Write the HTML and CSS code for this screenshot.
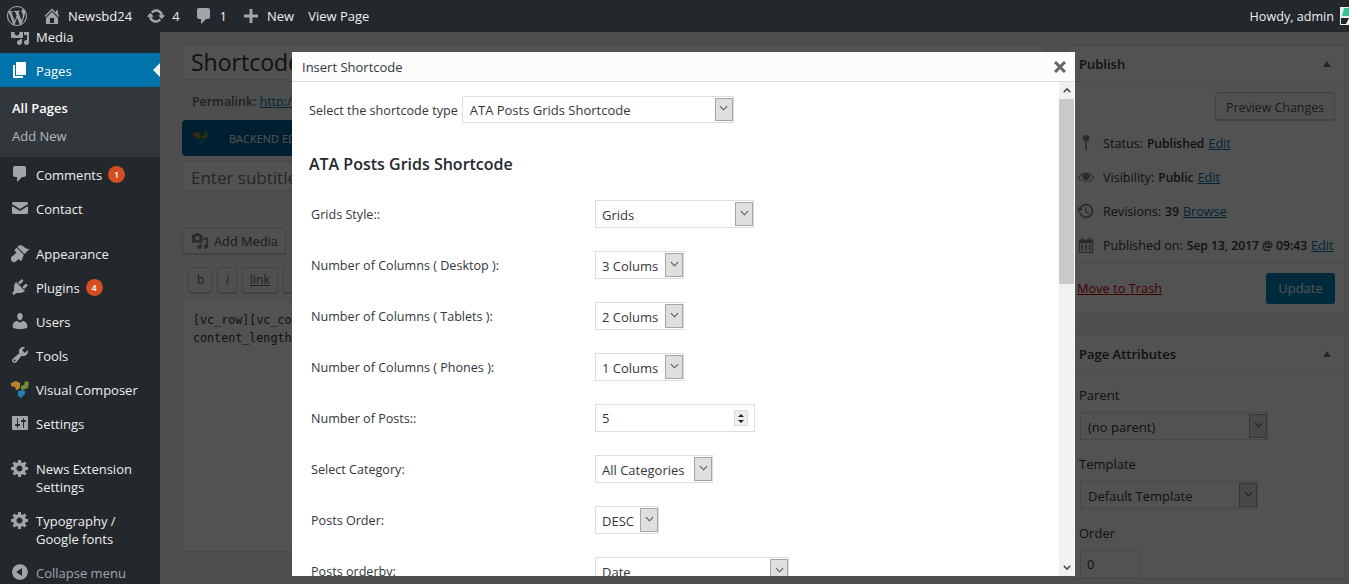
FILE: index.html
```html
<!DOCTYPE html>
<html lang="en">
  <head>
    <meta charset="UTF-8" />
    <title>Edit Page</title>
    <link rel="stylesheet" href="styles.css">
  </head>
  <body>
    <svg class="defs" width="0" height="0">
      <symbol id="i-wp" viewBox="0 0 20 20"><path d="M20 10c0-5.51-4.49-10-10-10C4.48 0 0 4.49 0 10c0 5.52 4.48 10 10 10 5.51 0 10-4.48 10-10zM7.78 15.37L4.37 6.22c.55-.02 1.17-.08 1.17-.08.5-.06.44-1.13-.06-1.11 0 0-1.45.11-2.37.11-.18 0-.37 0-.58-.01C4.12 2.69 6.87 1.11 10 1.11c2.33 0 4.45.87 6.05 2.34-.68-.11-1.65.39-1.65 1.58 0 .74.45 1.36.9 2.1.35.61.55 1.36.55 2.46 0 1.49-1.4 5-1.4 5l-3.03-8.37c.54-.02.82-.17.82-.17.5-.05.44-1.25-.06-1.22 0 0-1.44.12-2.38.12-.87 0-2.33-.12-2.33-.12-.5-.03-.56 1.2-.06 1.22l.92.08 1.26 3.41zM17.41 10c.24-.64.74-1.87.43-4.25.7 1.29 1.05 2.71 1.05 4.25 0 3.29-1.73 6.24-4.4 7.78.97-2.59 1.94-5.2 2.92-7.78zM6.1 18.09C3.12 16.65 1.11 13.53 1.11 10c0-1.3.23-2.48.72-3.59C3.25 10.3 4.67 14.2 6.1 18.09zm4.03-6.63l2.58 6.98c-.86.29-1.76.45-2.71.45-.79 0-1.57-.11-2.29-.33.81-2.38 1.62-4.74 2.42-7.1z"/></symbol>
      <symbol id="i-home" viewBox="0 0 20 20"><path d="M16 8.5l1.53 1.53-1.06 1.06L10 4.62l-6.47 6.47-1.06-1.06L10 2.5l4 4v-2h2v4zm-6-2.46l6 5.99V18H4v-5.97zM12 17v-5H8v5h4z"/></symbol>
      <symbol id="i-update" viewBox="0 0 20 20"><path d="M10.2 3.28c3.53 0 6.43 2.61 6.92 6h2.08l-3.5 4-3.5-4h2.32c-.45-1.97-2.21-3.45-4.32-3.45-1.45 0-2.73.71-3.54 1.78L4.95 5.66C6.23 4.2 8.11 3.28 10.2 3.28zm-.4 13.44c-3.52 0-6.43-2.61-6.92-6H.8l3.5-4c1.17 1.33 2.33 2.67 3.5 4H5.48c.45 1.97 2.21 3.45 4.32 3.45 1.45 0 2.73-.71 3.54-1.78l1.71 1.95c-1.28 1.46-3.15 2.38-5.25 2.38z"/></symbol>
      <symbol id="i-comment" viewBox="0 0 20 20"><path d="M5 2h9c1.1 0 2 .9 2 2v7c0 1.1-.9 2-2 2h-2l-5 5v-5H5c-1.1 0-2-.9-2-2V4c0-1.1.9-2 2-2z"/></symbol>
      <symbol id="i-plus" viewBox="0 0 20 20"><path d="M8.5 3h3v5.5H17v3h-5.5V17h-3v-5.5H3v-3h5.5z"/></symbol>
      <symbol id="i-pages" viewBox="0 0 20 20"><path d="M6 15V2h10v13H6zm-1 1h8v2H3V5h2v11z"/></symbol>
      <symbol id="i-media" viewBox="0 0 20 20"><path d="M13 11V4c0-.55-.45-1-1-1h-1.67L9 1H5L3.67 3H2c-.55 0-1 .45-1 1v7c0 .55.45 1 1 1h10c.55 0 1-.45 1-1zM7 4.5c1.38 0 2.5 1.12 2.5 2.5S8.38 9.5 7 9.5 4.5 8.38 4.5 7 5.62 4.5 7 4.5zM14 6h5v10.5c0 1.38-1.12 2.5-2.5 2.5S14 17.88 14 16.5s1.12-2.5 2.5-2.5c.17 0 .34.02.5.05V9h-3V6zm-4 8.05V13h2v3.5c0 1.38-1.12 2.5-2.5 2.5S7 17.88 7 16.5 8.12 14 9.5 14c.17 0 .34.02.5.05z"/></symbol>
      <symbol id="i-mail" viewBox="0 0 20 20"><path d="M2 5.5C2 4.7 2.7 4 3.500 4h13c.8 0 1.500.7 1.500 1.500V6l-8 5-8-5zM2 8l8 5 8-5v6.500c0 .8-.7 1.500-1.500 1.500h-13C2.700 16 2 15.300 2 14.500z"/></symbol>
      <symbol id="i-brush" viewBox="0 0 20 20"><path d="M14.48 11.06L7.41 3.99l1.5-1.5c.5-.56 2.3-.47 3.51.32 1.21.8 1.43 1.28 2.91 2.1 1.18.64 2.45 1.26 4.45.85zm-.71.71L6.7 4.7 4.93 6.47c-.39.39-.39 1.02 0 1.41l1.06 1.06c.39.39.39 1.03 0 1.42-.6.6-1.43 1.11-2.21 1.69-.35.26-.7.53-1.01.84C1.43 13.23.91 14.38 1 16.05c.06 1.04.45 2.37 2 2.95.44.16 1.42.24 2.08-.08 1.24-.59 2.1-1.57 2.92-2.39.39-.39 1.02-.39 1.41 0l.91.91c.39.39 1.02.39 1.42 0z"/></symbol>
      <symbol id="i-plug" viewBox="0 0 20 20"><path d="M13.11 4.36L9.87 7.6 8 5.73l3.24-3.24c.35-.34 1.05-.2 1.56.32.52.51.66 1.21.31 1.55zm-8 1.77l.91-1.12 9.01 9.01-1.19.84c-.71.71-2.63 1.16-3.82 1.16H6.14L4.9 17.26c-.59.59-1.54.59-2.12 0-.59-.58-.59-1.53 0-2.12l1.24-1.24v-3.88c0-1.13.4-3.19 1.09-3.89zm7.26 3.97l3.24-3.24c.34-.35 1.04-.21 1.55.31.52.51.66 1.21.31 1.55l-3.24 3.25z"/></symbol>
      <symbol id="i-user" viewBox="0 0 20 20"><path d="M10 9.25c-2.27 0-2.73-3.44-2.73-3.44C7 4.02 7.82 2 9.97 2c2.16 0 2.98 2.02 2.71 3.81 0 0-.41 3.44-2.68 3.44zm0 2.57L12.72 10c2.39 0 4.52 2.33 4.52 4.53v2.49s-3.65 1.13-7.24 1.13c-3.65 0-7.24-1.13-7.24-1.13v-2.49c0-2.25 1.94-4.48 4.47-4.48z"/></symbol>
      <symbol id="i-tools" viewBox="0 0 20 20"><path d="M16.68 9.770c-1.34 1.34-3.3 1.67-4.95.99l-5.41 6.52c-.99.99-2.59.99-3.58 0s-.99-2.59 0-3.57l6.52-5.42c-.68-1.65-.35-3.61.99-4.95 1.28-1.28 3.12-1.62 4.72-1.06l-2.89 2.89 2.82 2.82 2.86-2.87c.53 1.58.18 3.39-1.08 4.65zM3.81 16.21c.4.39 1.04.39 1.43 0 .4-.4.4-1.04 0-1.43-.39-.4-1.03-.4-1.43 0-.39.39-.39 1.03 0 1.43z"/></symbol>
      <symbol id="i-sliders" viewBox="0 0 20 20"><path d="M18 16V4c0-.55-.45-1-1-1H3c-.55 0-1 .45-1 1v12c0 .55.45 1 1 1h14c.55 0 1-.45 1-1zM8 11h1c.55 0 1 .45 1 1s-.45 1-1 1H8v1.500c0 .28-.22.5-.5.5s-.5-.22-.5-.5V13H6c-.55 0-1-.45-1-1s.45-1 1-1h1V5.500c0-.28.22-.5.5-.5s.5.22.5.5V11zm5-2h-1c-.55 0-1-.45-1-1s.45-1 1-1h1V5.500c0-.28.22-.5.5-.5s.5.22.5.5V7h1c.55 0 1 .45 1 1s-.45 1-1 1h-1v5.500c0 .28-.22.5-.5.5s-.5-.22-.5-.5V9z"/></symbol>
      <symbol id="i-gear" viewBox="0 0 20 20"><path d="M18 12h-2.180c-.17.7-.44 1.350-.81 1.930l1.540 1.540-2.100 2.100-1.540-1.540c-.58.36-1.230.63-1.910.79V19H8v-2.180c-.68-.16-1.330-.43-1.910-.79l-1.540 1.540-2.120-2.120 1.540-1.540c-.36-.58-.63-1.230-.79-1.910H1V9.030h2.170c.16-.7.44-1.350.8-1.940L2.430 5.550l2.100-2.100 1.540 1.540c.58-.37 1.240-.64 1.930-.81V2h3v2.180c.68.16 1.330.43 1.910.79l1.540-1.540 2.120 2.120-1.540 1.540c.36.59.64 1.240.8 1.940H18V12zm-8.500 1.500c1.660 0 3-1.340 3-3s-1.340-3-3-3-3 1.340-3 3 1.340 3 3 3z"/></symbol>
      <symbol id="i-collapse" viewBox="0 0 20 20"><path d="M10 2.160c4.330 0 7.840 3.510 7.840 7.840s-3.510 7.840-7.840 7.840S2.160 14.330 2.160 10 5.710 2.160 10 2.160zm2 11.720V6.120L6.180 9.970z"/></symbol>
      <symbol id="i-vc" viewBox="0 0 20 20"><path fill="#b5842a" d="M1 4l5-2 4 2v5l-3 2-1 0-1-3-4-1z"/><path fill="#6e8f3a" d="M11 7l3-1 1-4 4 1-1 6-5 2-2-1z"/><path fill="#1f7fae" d="M8 12l4-1 3 1v3l-4 4-3-2z"/></symbol>
      <symbol id="i-pin" viewBox="0 0 20 20"><path d="M10 1a3.800 3.800 0 0 0-1 7.470V17l1 2 1-2V8.470A3.800 3.800 0 0 0 10 1z"/></symbol>
      <symbol id="i-eye" viewBox="0 0 20 20"><path d="M18.300 9.500C15 4.900 8.500 3.800 3.900 7.200c-1.200.9-2.200 2.100-3 3.400.2.4.5.8.8 1.200 3.300 4.600 9.600 5.600 14.200 2.400.9-.7 1.700-1.400 2.400-2.400.3-.4.5-.8.8-1.200-.2-.3-.5-.7-.8-1.100zM10 15.200c-3.100 0-6-1.600-7.700-4.200C3.500 9 5.100 7.800 7 7c-.7.8-1 1.700-1 2.700 0 2.200 1.700 4.100 4 4.100 2.200 0 4.100-1.700 4.100-4v-.1c0-1-.4-2-1.100-2.700 1.900.8 3.500 2 4.700 3.900-1.700 2.700-4.600 4.300-7.700 4.300z"/></symbol>
      <symbol id="i-history" viewBox="0 0 20 20"><path d="M13.650 2.880c3.930 2.010 5.480 6.840 3.470 10.770s-6.830 5.480-10.770 3.470c-1.870-.96-3.200-2.560-3.860-4.400l1.640-1.030c.45 1.570 1.520 2.950 3.080 3.760 3.010 1.540 6.690.35 8.230-2.660 1.550-3.010.36-6.690-2.650-8.240C9.780 3.010 6.100 4.200 4.560 7.210l1.880.97-4.950 3.080-.39-5.820 1.780.91C4.900 2.400 9.750.89 13.650 2.880zM9 6h1.500v4.500l3 1.800-.8 1.200L9 11.300z"/></symbol>
      <symbol id="i-calendar" viewBox="0 0 20 20"><path d="M15 4h3v15H2V4h3V2h2v2h6V2h2zM3.500 8v9.500h13V8zM5 9.500h2v6.500H5zm4 0h2v6.500H9zm4 0h2v6.500h-2z"/></symbol>
      <symbol id="i-chev" viewBox="0 0 10 6"><path d="M1 1l4 4 4-4" fill="none" stroke="currentColor" stroke-width="1.200"/></symbol>
      <symbol id="i-chev-bold" viewBox="0 0 10 6"><path d="M1 1l4 4 4-4" fill="none" stroke="currentColor" stroke-width="2"/></symbol>
    </svg>

    <div class="adminbar">
      <a class="ab-item ab-logo"><svg class="ab-icon"><use href="#i-wp"/></svg></a>
      <a class="ab-item"><svg class="ab-icon"><use href="#i-home"/></svg>Newsbd24</a>
      <a class="ab-item"><svg class="ab-icon"><use href="#i-update"/></svg>4</a>
      <a class="ab-item"><svg class="ab-icon"><use href="#i-comment"/></svg>1</a>
      <a class="ab-item"><svg class="ab-icon"><use href="#i-plus"/></svg>New</a>
      <a class="ab-item">View Page</a>
      <div class="ab-right">
        <span>Howdy, admin</span>
        <svg class="avatar" viewBox="0 0 9 18"><rect width="9" height="18" fill="#e8eeee"/><path fill="#36c39a" d="M4 1h5v8H2z"/><path fill="#1d2327" d="M1 11h8l-3 6H1z"/></svg>
      </div>
    </div>

    <div class="wrap">
      <nav class="sidebar">
        <a class="menu-item menu-clipped"><svg class="menu-icon"><use href="#i-media"/></svg>Media</a>
        <a class="menu-item menu-current"><svg class="menu-icon"><use href="#i-pages"/></svg>Pages<i class="menu-arrow"></i></a>
        <div class="submenu">
          <a class="sub-current">All Pages</a>
          <a>Add New</a>
        </div>
        <a class="menu-item"><svg class="menu-icon"><use href="#i-comment"/></svg>Comments<span class="count">1</span></a>
        <a class="menu-item menu-sep"><svg class="menu-icon"><use href="#i-mail"/></svg>Contact</a>
        <a class="menu-item"><svg class="menu-icon"><use href="#i-brush"/></svg>Appearance</a>
        <a class="menu-item"><svg class="menu-icon"><use href="#i-plug"/></svg>Plugins<span class="count">4</span></a>
        <a class="menu-item"><svg class="menu-icon"><use href="#i-user"/></svg>Users</a>
        <a class="menu-item"><svg class="menu-icon"><use href="#i-tools"/></svg>Tools</a>
        <a class="menu-item"><svg class="menu-icon"><use href="#i-vc"/></svg>Visual Composer</a>
        <a class="menu-item menu-sep"><svg class="menu-icon"><use href="#i-sliders"/></svg>Settings</a>
        <a class="menu-item menu-tall"><svg class="menu-icon"><use href="#i-gear"/></svg><span>News Extension<br />Settings</span></a>
        <a class="menu-item menu-tall"><svg class="menu-icon"><use href="#i-gear"/></svg><span>Typography /<br />Google fonts</span></a>
        <a class="menu-item menu-collapse"><svg class="menu-icon"><use href="#i-collapse"/></svg>Collapse menu</a>
      </nav>

      <main class="content">
        <div class="editor-col">
          <div class="title-input">Shortcode</div>
          <div class="permalink"><b>Permalink:</b> <a href="#">http://newsbd24.local/shortcode/</a></div>
          <div class="vc-bar">
            <span class="vc-logo"><svg class="vc-icon"><use href="#i-vc"/></svg></span>
            <span>BACKEND EDITOR</span>
          </div>
          <div class="subtitle-input">Enter subtitle here</div>
          <div class="btn add-media"><svg class="btn-icon"><use href="#i-media"/></svg>Add Media</div>
          <div class="editor">
            <div class="toolbar">
              <span class="tb-btn tb-b">b</span>
              <span class="tb-btn tb-i">i</span>
              <span class="tb-btn tb-link">link</span>
              <span class="tb-btn">b-quote</span>
            </div>
            <div class="code">[vc_row][vc_column][ata_posts_grids columns="3"<br />content_length="20"]</div>
          </div>
        </div>

        <aside class="side-col">
          <section class="postbox">
            <h2 class="postbox-head">Publish<i class="caret-up"></i></h2>
            <div class="publish-top"><span class="btn btn-preview">Preview Changes</span></div>
            <p class="pub-row"><svg class="pub-icon"><use href="#i-pin"/></svg>Status: <b>Published</b> <a href="#">Edit</a></p>
            <p class="pub-row"><svg class="pub-icon"><use href="#i-eye"/></svg>Visibility: <b>Public</b> <a href="#">Edit</a></p>
            <p class="pub-row"><svg class="pub-icon"><use href="#i-history"/></svg>Revisions: <b>39</b> <a href="#">Browse</a></p>
            <p class="pub-row"><svg class="pub-icon"><use href="#i-calendar"/></svg>Published on: <b>Sep 13, 2017 @ 09:43</b> <a href="#">Edit</a></p>
            <div class="publish-actions">
              <a class="trash" href="#">Move to Trash</a>
              <span class="btn-primary">Update</span>
            </div>
          </section>

          <section class="postbox">
            <h2 class="postbox-head">Page Attributes<i class="caret-up"></i></h2>
            <div class="attr-body">
              <p class="attr-label">Parent</p>
              <div class="sel sel-parent"><span class="sel-value">(no parent)</span><span class="sel-arrow"><svg><use href="#i-chev"/></svg></span></div>
              <p class="attr-label">Template</p>
              <div class="sel sel-template"><span class="sel-value">Default Template</span><span class="sel-arrow"><svg><use href="#i-chev"/></svg></span></div>
              <p class="attr-label">Order</p>
              <div class="order-input">0</div>
            </div>
          </section>
        </aside>
      </main>
      <div class="overlay"></div>
    </div>

    <div class="modal">
      <div class="modal-head">
        <span>Insert Shortcode</span>
        <svg class="modal-close" viewBox="0 0 12 12"><path d="M1 1l10 10M11 1L1 11" stroke="#666" stroke-width="3" fill="none"/></svg>
      </div>
      <div class="modal-main">
        <div class="modal-body">
          <div class="type-row">
            <label>Select the shortcode type</label>
            <div class="sel sel-type"><span class="sel-value">ATA Posts Grids Shortcode</span><span class="sel-arrow"><svg><use href="#i-chev"/></svg></span></div>
          </div>
          <h3 class="sc-title">ATA Posts Grids Shortcode</h3>
          <div class="field">
            <label>Grids Style::</label>
            <div class="sel w-159"><span class="sel-value">Grids</span><span class="sel-arrow"><svg><use href="#i-chev"/></svg></span></div>
          </div>
          <div class="field">
            <label>Number of Columns ( Desktop ):</label>
            <div class="sel w-89"><span class="sel-value">3 Colums</span><span class="sel-arrow"><svg><use href="#i-chev"/></svg></span></div>
          </div>
          <div class="field">
            <label>Number of Columns ( Tablets ):</label>
            <div class="sel w-89"><span class="sel-value">2 Colums</span><span class="sel-arrow"><svg><use href="#i-chev"/></svg></span></div>
          </div>
          <div class="field">
            <label>Number of Columns ( Phones ):</label>
            <div class="sel w-89"><span class="sel-value">1 Colums</span><span class="sel-arrow"><svg><use href="#i-chev"/></svg></span></div>
          </div>
          <div class="field">
            <label>Number of Posts::</label>
            <div class="num-input"><span>5</span><span class="spin"><i class="spin-up"></i><i class="spin-down"></i></span></div>
          </div>
          <div class="field">
            <label>Select Category:</label>
            <div class="sel w-118"><span class="sel-value">All Categories</span><span class="sel-arrow"><svg><use href="#i-chev"/></svg></span></div>
          </div>
          <div class="field">
            <label>Posts Order:</label>
            <div class="sel w-64"><span class="sel-value">DESC</span><span class="sel-arrow"><svg><use href="#i-chev"/></svg></span></div>
          </div>
          <div class="field">
            <label>Posts orderby:</label>
            <div class="sel w-194"><span class="sel-value">Date</span><span class="sel-arrow"><svg><use href="#i-chev"/></svg></span></div>
          </div>
        </div>
        <div class="scrollbar">
          <span class="sb-btn"><svg class="sb-up"><use href="#i-chev-bold"/></svg></span>
          <span class="sb-thumb"></span>
          <span class="sb-track"></span>
          <span class="sb-btn"><svg><use href="#i-chev-bold"/></svg></span>
        </div>
      </div>
    </div>
  </body>
</html>
```

FILE: styles.css
```css
* {
  box-sizing: border-box;
}

html,
body {
  margin: 0;
  height: 584px;
  overflow: hidden;
}

body {
  position: relative;
  background-color: #f1f1f1;
  font-family: "Open Sans", "Liberation Sans", sans-serif;
  font-size: 13px;
  color: #444;
}

.defs {
  position: absolute;
}

/* top bar */
.adminbar {
  display: flex;
  align-items: center;
  height: 32px;
  background-color: #23282d;
  color: #eee;
  position: relative;
  z-index: 2;
}

.ab-item {
  display: flex;
  align-items: center;
  gap: 6px;
  padding: 0 7px;
  line-height: 32px;
  font-size: 13px;
}

.ab-icon {
  width: 20px;
  height: 20px;
  fill: #a0a5aa;
}

.ab-logo {
  padding-right: 8px;
}

.ab-right {
  display: flex;
  align-items: center;
  gap: 6px;
  margin-left: auto;
  font-size: 12.6px;
}

.avatar {
  flex: none;
  width: 9px;
  height: 18px;
}

.wrap {
  display: flex;
  position: relative;
  height: 552px;
  overflow: hidden;
}

/* left menu */
.sidebar {
  flex: 0 0 160px;
  background-color: #23282d;
  color: #eee;
  font-size: 13px;
  overflow: hidden;
  position: relative;
  z-index: 2;
}

.menu-item {
  display: flex;
  align-items: center;
  height: 34px;
  padding-top: 2px;
  position: relative;
}

.menu-icon {
  width: 20px;
  height: 20px;
  flex: none;
  margin: -2px 6px 0 10px;
  fill: #a0a5aa;
}

.menu-clipped {
  margin-top: -13px;
}

.menu-current {
  background-color: #0073aa;
  color: #fff;
}

.menu-current .menu-icon {
  fill: #fff;
}

.menu-arrow {
  position: absolute;
  right: 0;
  top: 10px;
  border: 7px solid transparent;
  border-right-color: #f1f1f1;
  border-left-width: 0;
}

.submenu {
  display: flex;
  flex-direction: column;
  height: 70px;
  padding: 7px 0 0 12px;
  background-color: #32373c;
  color: #b4b9be;
  font-size: 13px;
}

.submenu a {
  height: 28px;
  line-height: 28px;
}

.sub-current {
  color: #fff;
  font-weight: 600;
}

.count {
  display: inline-block;
  width: 17px;
  height: 17px;
  margin: -2px 0 0 6px;
  border-radius: 50%;
  background-color: #d54e21;
  color: #fff;
  font-size: 9px;
  font-weight: 600;
  line-height: 17px;
  text-align: center;
}

.menu-sep {
  margin-bottom: 11px;
}

.menu-tall {
  height: 52px;
  line-height: 18px;
  align-items: flex-start;
  padding-top: 9px;
}

.menu-collapse {
  color: #a0a5aa;
}

/* page behind the dialog */
.content {
  flex: 1;
  display: grid;
  grid-template-columns: 863px 278px;
  column-gap: 22px;
  padding: 12px 0 0 22px;
  color: #32373c;
  align-items: start;
  overflow: hidden;
}

.title-input {
  height: 36px;
  padding: 0 8px;
  background-color: #fff;
  border: 1px solid #ddd;
  font-size: 23px;
  line-height: 34px;
}

.permalink {
  height: 40px;
  padding: 12px 10px 0;
  color: #666;
  font-size: 12.4px;
  line-height: 20px;
}

.permalink b {
  font-weight: 600;
}

.permalink a,
.pub-row a {
  color: #0073aa;
}

.vc-bar {
  display: flex;
  align-items: center;
  height: 36px;
  background-color: #00629a;
  border-radius: 4px;
  color: #fff;
  font-size: 11px;
}

.vc-logo {
  display: flex;
  align-items: center;
  height: 36px;
  padding: 0 10px;
  margin-right: 9px;
  border-right: 1px solid #005a8a;
}

.vc-icon {
  width: 17px;
  height: 17px;
}

.subtitle-input {
  height: 30px;
  margin: 5px 0 37px;
  padding: 0 8px;
  background-color: #fff;
  border: 1px solid #ddd;
  color: #72777c;
  font-size: 17px;
  line-height: 32px;
}

.btn {
  display: inline-flex;
  align-items: center;
  height: 28px;
  padding: 0 10px;
  background-color: #f7f7f7;
  border: 1px solid #ccc;
  border-radius: 3px;
  box-shadow: 0 1px 0 #ccc;
  color: #555;
  white-space: nowrap;
}

.btn-preview {
  justify-content: center;
  width: 120px;
  padding: 2px 0 0;
  font-size: 12.4px;
}

.add-media {
  height: 26px;
  padding: 0 6px 0 8px;
  width: 104px;
  gap: 5px;
  font-size: 12.8px;
}

.btn-icon {
  width: 18px;
  height: 18px;
  flex: none;
  fill: #82878c;
}

.editor {
  margin-top: 8px;
  height: 290px;
  background-color: #fdfdfd;
  border: 1px solid #e5e5e5;
}

.toolbar {
  display: flex;
  gap: 5px;
  height: 36px;
  padding: 4px 5px;
  background-color: #f5f5f5;
  border-bottom: 1px solid #e5e5e5;
}

.tb-btn {
  height: 26px;
  padding: 0 8px;
  background-color: #f7f7f7;
  border: 1px solid #ccc;
  border-radius: 3px;
  box-shadow: 0 1px 0 #ccc;
  color: #666;
  font-size: 12px;
  line-height: 24px;
}

.tb-b {
  width: 24px;
}

.tb-i {
  width: 20px;
  font-style: italic;
}

.tb-link {
  width: 36px;
  padding: 0 7px;
  text-decoration: underline;
}

.code {
  padding: 12px 10px;
  font-family: "DejaVu Sans Mono", "Liberation Mono", monospace;
  font-size: 11.7px;
  line-height: 18px;
  color: #32373c;
}

.postbox {
  margin: 1px 0 21px;
  background-color: #fff;
  border: 1px solid #e5e5e5;
}

.postbox-head {
  display: flex;
  justify-content: space-between;
  align-items: center;
  height: 36px;
  margin: 0;
  padding: 0 13px 0 11px;
  border-bottom: 1px solid #eee;
  font-size: 13px;
  font-weight: 600;
  color: #32373c;
}

.caret-up {
  border: 4px solid transparent;
  border-bottom: 6px solid #72777c;
  border-top-width: 0;
}

.publish-top {
  display: flex;
  justify-content: flex-end;
  padding: 10px 9px 6px;
}

.pub-row {
  display: flex;
  align-items: center;
  gap: 4px;
  height: 34px;
  margin: 0;
  padding-left: 9px;
  font-size: 12.6px;
  white-space: nowrap;
}

.pub-row b {
  font-size: 12.1px;
  font-weight: 600;
}

.pub-icon {
  flex: none;
  width: 18px;
  height: 18px;
  margin-right: 4px;
  fill: #82878c;
}

.publish-actions {
  display: flex;
  justify-content: space-between;
  align-items: center;
  height: 51px;
  padding: 0 9px;
  border-top: 1px solid #ddd;
}

.trash {
  color: #c00;
  font-size: 12.8px;
}

.btn-primary {
  width: 69px;
  height: 31px;
  background-color: #0085ba;
  border-radius: 3px;
  color: #fff;
  line-height: 31px;
  text-align: center;
}

.attr-body {
  padding: 14px 12px 0;
}

.attr-label {
  margin: 0 0 8px -1px;
  line-height: 18px;
}

.attr-body .sel {
  margin-bottom: 15px;
}

.attr-body .sel-value {
  padding-left: 6px;
}

.order-input {
  width: 60px;
  height: 28px;
  padding: 0 6px;
  background-color: #fff;
  border: 1px solid #ddd;
  line-height: 26px;
}

.overlay {
  position: absolute;
  left: 160px;
  right: 0;
  top: 0;
  bottom: 0;
  background-color: rgba(0, 0, 0, 0.68);
}

/* dialog */
.modal {
  position: absolute;
  left: 292px;
  top: 52px;
  width: 783px;
  height: 524px;
  display: flex;
  flex-direction: column;
  background-color: #fff;
  color: #32373c;
  z-index: 3;
}

.modal-head {
  display: flex;
  justify-content: space-between;
  align-items: center;
  flex: 0 0 30px;
  padding: 0 9px 0 10px;
  background-color: #fcfcfc;
  border-bottom: 1px solid #ddd;
  font-size: 13px;
}

.modal-close {
  width: 12px;
  height: 12px;
}

.modal-main {
  flex: 1;
  display: flex;
  min-height: 0;
}

.modal-body {
  flex: 1;
  overflow: hidden;
  padding: 14px 0 0 17px;
  font-size: 12.6px;
}

.type-row {
  display: flex;
  align-items: center;
  gap: 4px;
  height: 27px;
}

.type-row label {
  padding-top: 2px;
}

.type-row .sel-value {
  padding-left: 6px;
  line-height: 25px;
}

.sc-title {
  margin: 29px 0 0;
  height: 24px;
  line-height: 24px;
  font-size: 16px;
  font-weight: 600;
  color: #23282d;
}

.field {
  display: flex;
  align-items: center;
  height: 28px;
  margin-bottom: 23px;
  padding-left: 2px;
}

.sc-title + .field {
  margin-top: 24px;
}

.field label {
  flex: 0 0 284px;
}

.sel {
  display: flex;
  align-items: stretch;
  height: 28px;
  padding: 1px 0 1px 1px;
  background-color: #fff;
  border: 1px solid #ddd;
  font-size: 13px;
  color: #32373c;
}

.sel-value {
  flex: 1;
  padding-left: 5px;
  line-height: 26px;
  white-space: nowrap;
}

.sel-arrow {
  display: flex;
  align-items: center;
  justify-content: center;
  flex: 0 0 18px;
  background-color: #dfdfdf;
  border: 1px solid #a6a6a6;
  color: #555;
}

.sel-arrow svg {
  width: 9px;
  height: 6px;
  margin-top: -3px;
}

.sel-type {
  width: 272px;
  height: 27px;
}

.sel-parent {
  width: 188px;
}

.sel-template {
  width: 178px;
}

.w-159 {
  width: 159px;
}

.w-89 {
  width: 89px;
}

.w-118 {
  width: 118px;
}

.w-64 {
  width: 64px;
}

.w-194 {
  width: 194px;
}

.num-input {
  display: flex;
  align-items: center;
  justify-content: space-between;
  width: 160px;
  height: 28px;
  padding: 0 6px;
  background-color: #fff;
  border: 1px solid #ddd;
  font-size: 13px;
}

.spin {
  display: flex;
  flex-direction: column;
  align-items: center;
  gap: 3px;
  width: 14px;
  height: 16px;
  padding-top: 3px;
  background-color: #eee;
  border: 1px solid #ddd;
}

.spin-up {
  border: 3px solid transparent;
  border-bottom: 3px solid #222;
  border-top-width: 0;
}

.spin-down {
  border: 3px solid transparent;
  border-top: 3px solid #222;
  border-bottom-width: 0;
}

.scrollbar {
  flex: 0 0 15px;
  margin-right: 1px;
  display: flex;
  flex-direction: column;
  background-color: #f1f1f1;
}

.sb-btn {
  display: flex;
  align-items: center;
  justify-content: center;
  flex: 0 0 17px;
  color: #505050;
}

.sb-btn svg {
  width: 8px;
  height: 5px;
}

.sb-up {
  transform: rotate(180deg);
}

.sb-thumb {
  flex: 0 0 185px;
  background-color: #c9c9c9;
}

.sb-track {
  flex: 1;
}
```
